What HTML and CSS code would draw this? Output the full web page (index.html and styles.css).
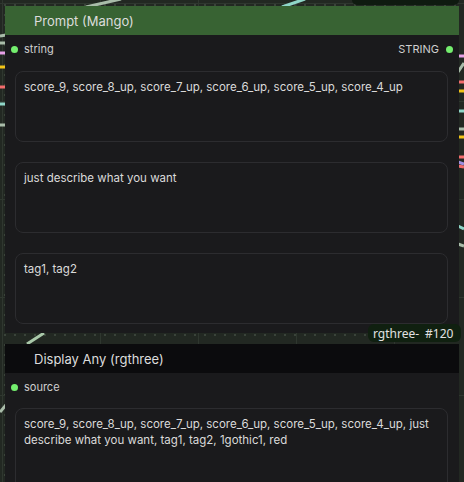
FILE: index.html
```html
<!DOCTYPE html>
<html>
<head>
<meta charset="utf-8">
<link rel="stylesheet" href="styles.css">
</head>
<body>
<div class="canvas">
  <svg class="wires" width="464" height="482" viewBox="0 0 464 482">
    <g stroke-width="3" stroke-linecap="butt" fill="none">
      <line x1="86" y1="7" x2="121" y2="-1" stroke="#a9bca9"/>
      <line x1="282" y1="7" x2="305" y2="-1" stroke="#8fd6c8"/>
      <line x1="0" y1="36" x2="6" y2="35" stroke="#a9bca9"/>
      <line x1="0" y1="43" x2="6" y2="43" stroke="#a9bca9"/>
      <line x1="0" y1="53" x2="6" y2="53" stroke="#e7a0e7"/>
      <line x1="0" y1="67" x2="6" y2="67" stroke="#f2c418"/>
      <line x1="0" y1="87" x2="6" y2="87" stroke="#f26c6c"/>
      <line x1="0" y1="104" x2="6" y2="104" stroke="#8fd6c8"/>
      <line x1="0" y1="125" x2="6" y2="125" stroke="#a9bca9"/>
      <line x1="27" y1="344" x2="44" y2="333" stroke="#a9c8a9"/>
      <line x1="0" y1="412" x2="6" y2="405" stroke="#a9bca9"/>
      <line x1="458" y1="56" x2="464" y2="56" stroke="#e7a0e7"/>
      <line x1="458" y1="72" x2="464" y2="63" stroke="#a9bca9"/>
      <line x1="458" y1="82" x2="464" y2="82" stroke="#f26c6c"/>
      <line x1="458" y1="91" x2="464" y2="91" stroke="#f2c418"/>
      <line x1="458" y1="111" x2="464" y2="111" stroke="#8fd6c8"/>
      <line x1="458" y1="129" x2="464" y2="129" stroke="#a9bca9"/>
      <line x1="458" y1="137" x2="464" y2="137" stroke="#f2c418"/>
      <line x1="458" y1="157" x2="464" y2="157" stroke="#f26c6c"/>
      <line x1="458" y1="162" x2="464" y2="164" stroke="#9f8fe0"/>
      <line x1="458" y1="166" x2="464" y2="167" stroke="#f26c6c"/>
      <line x1="458" y1="226" x2="464" y2="229" stroke="#8fd6c8"/>
      <line x1="458" y1="244" x2="464" y2="246" stroke="#a9bca9"/>
    </g>
  </svg>
  <div class="topbadge"></div>

  <div class="node node-prompt">
    <div class="node-title title-green">Prompt (Mango)</div>
    <div class="node-body body-prompt">
      <div class="slots">
        <div class="slot slot-in"><span class="dot"></span><span>string</span></div>
        <div class="slot slot-out"><span>STRING</span><span class="dot"></span></div>
      </div>
      <textarea class="field field-first" readonly>score_9, score_8_up, score_7_up, score_6_up, score_5_up, score_4_up</textarea>
      <textarea class="field" readonly>just describe what you want</textarea>
      <textarea class="field" readonly>tag1, tag2</textarea>
    </div>
    <div class="badge"><span>rgthree-</span><span>#120</span></div>
  </div>

  <div class="node node-display">
    <div class="node-title title-dark">Display Any (rgthree)</div>
    <div class="node-body body-display">
      <div class="slots">
        <div class="slot slot-in"><span class="dot"></span><span>source</span></div>
      </div>
      <textarea class="field field-display" readonly>score_9, score_8_up, score_7_up, score_6_up, score_5_up, score_4_up, just describe what you want, tag1, tag2, 1gothic1, red</textarea>
    </div>
  </div>
</div>
</body>
</html>
```

FILE: styles.css
```css
* { box-sizing: border-box; }
html, body {
  margin: 0;
  padding: 0;
  width: 464px;
  height: 482px;
  overflow: hidden;
  background: #222822;
}
.canvas {
  position: relative;
  width: 464px;
  height: 482px;
  overflow: hidden;
  background-color: #222822;
  background-image:
    linear-gradient(to right, #2f372f 1px, transparent 1px),
    linear-gradient(to bottom, #2f372f 1px, transparent 1px),
    radial-gradient(circle, #3a433a 0.8px, transparent 1px);
  background-size: 98px 98px, 98px 98px, 10px 10px;
  background-position: 2px 0, 0 3px, 0 0;
  font-family: Inter, "Noto Sans", sans-serif;
}
.wires {
  position: absolute;
  left: 0;
  top: 0;
}
.topbadge {
  position: absolute;
  left: 352px;
  top: -6px;
  width: 107px;
  height: 11px;
  border-radius: 5px;
  background: #0f1a10;
}
.node {
  position: absolute;
  left: 5px;
  width: 454px;
}
.node-prompt { top: 6px; }
.node-display { top: 344px; }
.node-title {
  height: 29px;
  padding-left: 29px;
  display: flex;
  align-items: center;
  font-size: 13px;
  color: #dcdcdc;
}
.title-green { background: #386333; }
.title-dark { background: #0b0b0d; }
.node-body {
  background: #1a1a1c;
  padding: 4px 11px 0 10px;
}
.body-prompt { height: 298px; }
.body-display { height: 120px; }
.slots {
  height: 20px;
  display: flex;
  justify-content: space-between;
  align-items: center;
  font-size: 11px;
  color: #cfcfcf;
}
.slot {
  display: flex;
  align-items: center;
  gap: 6px;
}
.slot-in { margin-left: -4px; }
.slot-out { margin-right: -5px; gap: 7px; }
.dot {
  width: 7px;
  height: 7px;
  border-radius: 50%;
  background: #74ee6e;
}
.field {
  display: block;
  width: 433px;
  height: 71px;
  margin: 20px 0 0 0;
  padding: 8px 8px;
  border: 1px solid #2c2c2f;
  border-radius: 8px;
  background: #1a1a1c;
  color: #dadada;
  font-family: Inter, "Noto Sans", sans-serif;
  font-size: 11.5px;
  line-height: 15.5px;
  resize: none;
  outline: none;
  overflow: hidden;
}
.field-first { margin-top: 12px; }
.field-display { margin-top: 11px; height: 120px; }
.badge {
  position: absolute;
  left: 363px;
  top: 318px;
  height: 18px;
  padding: 0 8px 0 5px;
  display: flex;
  align-items: center;
  gap: 6px;
  border-radius: 6px;
  background: #102010;
  color: #e2e2e2;
  font-family: "Noto Sans", sans-serif;
  font-size: 12px;
}
```
